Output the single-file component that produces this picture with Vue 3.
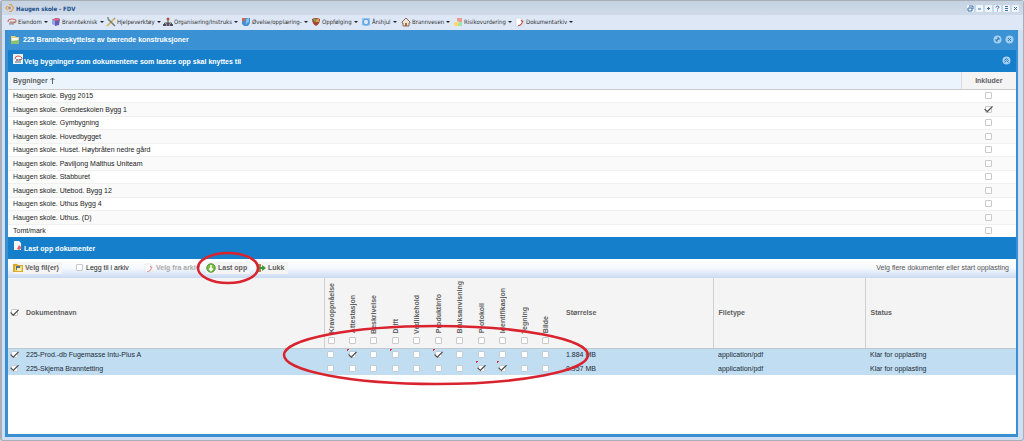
<script setup>
import { ref } from 'vue'

const menus = [
  { label: 'Eiendom', icon: 'estate' },
  { label: 'Brannteknisk', icon: 'fire' },
  { label: 'Hjelpeverktøy', icon: 'tools' },
  { label: 'Organisering/Instruks', icon: 'org' },
  { label: 'Øvelse/opplæring-', icon: 'training' },
  { label: 'Oppfølging', icon: 'shield' },
  { label: 'Årshjul', icon: 'wheel' },
  { label: 'Brannvesen', icon: 'house' },
  { label: 'Risikovurdering', icon: 'risk' },
  { label: 'Dokumentarkiv', icon: 'doc' },
]

const windowTools = [
  { name: 'Gjenopprett', d: 'M1 3h4v3h-4zM2 1h4v3' },
  { name: 'Minimer', d: 'M2 4h3' },
  { name: 'Maksimer', d: 'M2 3.5h3M3.5 2v3' },
  { name: 'Hjelp', d: 'M2 2.500q0-1.500 1.500-1.500t1.500 1.200q0 .8-1.500 1.500v.6M3.500 5.500v.8' },
  { name: 'Fest', d: 'M2 1.500h3M2 3.500h3M2 5.500h3' },
  { name: 'Lukk', d: 'M2 2l3 3M5 2l-3 3' },
]

const buildings = ref([
  { name: 'Haugen skole. Bygg 2015', on: false },
  { name: 'Haugen skole. Grendeskolen Bygg 1', on: true },
  { name: 'Haugen skole. Gymbygning', on: false },
  { name: 'Haugen skole. Hovedbygget', on: false },
  { name: 'Haugen skole. Huset. Høybråten nedre gård', on: false },
  { name: 'Haugen skole. Paviljong Malthus Uniteam', on: false },
  { name: 'Haugen skole. Stabburet', on: false },
  { name: 'Haugen skole. Utebod. Bygg 12', on: false },
  { name: 'Haugen skole. Uthus Bygg 4', on: false },
  { name: 'Haugen skole. Uthus. (D)', on: false },
  { name: 'Tomt/mark', on: false },
])

const tags = ['Kravoppnåelse', 'Attestasjon', 'Beskrivelse', 'Drift', 'Vedlikehold', 'Produktinfo',
  'Bruksanvisning', 'Protokoll', 'Identifikasjon', 'Tegning', 'Bilde']

const documents = ref([
  { name: '225-Prod.-db Fugemasse Intu-Plus A', size: '1.884 MB', tags: [1, 5], changed: [1, 3, 5] },
  { name: '225-Skjema Branntetting', size: '0.957 MB', tags: [7, 8], changed: [7, 8] },
])
</script>

<template>
  <div class="window">
    <header class="titlebar">
      <svg class="icon" viewBox="0 0 10 10"><g fill="none" stroke="#e79a45" stroke-width="1.200"><path d="M4 1.500h2.500M6.500 8.500H4M2.500 3L1 5l1.500 2" /><path d="M6 1.500L8.500 5 6 8.500" /></g><circle cx="4.500" cy="5" r="1.400" fill="#b98a62" /></svg>
      <h1>Haugen skole - FDV</h1>
      <div class="window-tools">
        <button v-for="t in windowTools" :key="t.name" type="button" :aria-label="t.name">
          <svg viewBox="0 0 7 7"><path :d="t.d" /></svg>
        </button>
      </div>
    </header>

    <nav class="menubar">
      <button v-for="m in menus" :key="m.label" type="button">
        <svg class="icon" viewBox="0 0 10 10">
          <g v-if="m.icon === 'estate'" fill="none"><path d="M1 5q0-3 4-3t4 2-4 2H2" stroke="#d86552" stroke-width="1.200" /><path d="M2 7h5M3 5h5" stroke="#8c8c96" /></g>
          <g v-else-if="m.icon === 'fire'"><path d="M1 2l4 1v6L1 7z" fill="#8fa6df" /><path d="M4 1l5 1-1 6-4 1z" fill="#6b5bbb" /><path d="M1 2l7-1 1 2-5 1z" fill="#d8667b" /></g>
          <g v-else-if="m.icon === 'tools'" fill="none" stroke-width="1.500"><path d="M1 9l7-7" stroke="#d9ae45" /><path d="M2 2l7 7" stroke="#6d7d72" /><path d="M1 1l2 0M8 1l1 1" stroke="#7b9a74" /></g>
          <g v-else-if="m.icon === 'org'"><path d="M5 3v3M1.500 8V6h7v2" fill="none" stroke="#554" /><circle cx="5" cy="2" r="1.500" fill="#a65745" /><path d="M0 7h3v2H0zM3.500 6h3v3h-3zM7 7h3v2H7z" fill="#504b5e" /></g>
          <g v-else-if="m.icon === 'training'"><path d="M1 1h8v5L7 9H3L1 7z" fill="#478fd2" /><path d="M1 1h3v3H1z" fill="#d7634d" /><path d="M5 2l3-1v4L5 7z" fill="#7ac4ed" /></g>
          <g v-else-if="m.icon === 'shield'"><path d="M1 2q4-2 8 0 0 5-4 7-4-2-4-7z" fill="#a4432f" /><path d="M2 2h4L3 5z" fill="#6aa64e" /><path d="M6 2h2v3H4z" fill="#d8a248" /></g>
          <g v-else-if="m.icon === 'wheel'" fill="none"><circle cx="5" cy="5" r="3" stroke="#58a4ea" stroke-width="1.700" /><path d="M2 1v2M8 1v2M1 7l2 1M7 8l2-1" stroke="#80baf1" stroke-width="1.500" /></g>
          <g v-else-if="m.icon === 'house'"><path d="M1 5l4-4 4 4v1H8v3H2V6H1z" fill="#eee5d4" stroke="#876d5d" /><path d="M4 6h2v3H4z" fill="#a16a4e" /></g>
          <g v-else-if="m.icon === 'risk'"><path d="M1 5h4v4H1z" fill="#ffd86f" /><path d="M4 1h5v4H6L4 4z" fill="#ef9c88" /><path d="M6 5h3v4H5V7z" fill="#a4e3a0" /></g>
          <g v-else><path d="M1 1h5l2 2v6H1z" fill="#fff" stroke="#cbd2de" stroke-width=".7" /><path d="M3 8.500q4 0 4.500-4.500M6 3l2 2" fill="none" stroke="#b94a4a" stroke-width="1.200" /></g>
        </svg>
        <span>{{ m.label }}</span><i class="caret"></i>
      </button>
    </nav>

    <main class="panel">
      <div class="panel-head">
        <svg class="icon" viewBox="0 0 10 10"><path d="M1 1h4l1 1h3v7H1z" fill="#e6d27e" /><path d="M2 3h6v4H2z" fill="#f7f6e8" /><path d="M1 6l8-1v4H1z" fill="#8fc06b" /></svg>
        <h2>225 Brannbeskyttelse av bærende konstruksjoner</h2>
        <button class="round" type="button" aria-label="Utvid"><svg viewBox="0 0 9 9"><circle cx="4.500" cy="4.500" r="4" /><path d="M3 6l3-3M4 3h2v2M3 4v2h2" /></svg></button>
        <button class="round" type="button" aria-label="Lukk panel"><svg viewBox="0 0 9 9"><circle cx="4.500" cy="4.500" r="4" /><path d="M3 3l3 3M6 3l-3 3" /></svg></button>
      </div>

      <section>
        <div class="section-head">
          <svg class="icon" viewBox="0 0 10 10"><path d="M0 0h10v10H0z" fill="#edf3f8" /><path d="M2 5q0-3 3-3t4 2-3 2H3" fill="none" stroke="#d05e50" /><path d="M2 8h6M3 6h2M6 6h2" stroke="#536b84" /></svg>
          <h3>Velg bygninger som dokumentene som lastes opp skal knyttes til</h3>
          <button class="round" type="button" aria-label="Skjul"><svg viewBox="0 0 9 9"><circle cx="4.500" cy="4.500" r="4" /><path d="M2.500 4.500l2-2 2 2M2.500 6.500l2-2 2 2" /></svg></button>
        </div>
        <table class="buildings">
          <thead>
            <tr><th class="sorted" aria-sort="ascending">Bygninger <svg viewBox="0 0 5 7"><path d="M2.500 7V1M.5 3l2-2 2 2" /></svg></th><th class="include">Inkluder</th></tr>
          </thead>
          <tbody>
            <tr v-for="b in buildings" :key="b.name">
              <td>{{ b.name }}</td>
              <td class="include"><input v-model="b.on" type="checkbox" :aria-label="'Inkluder ' + b.name"></td>
            </tr>
          </tbody>
        </table>
      </section>

      <section>
        <div class="section-head">
          <svg class="icon" viewBox="0 0 10 10"><path d="M1 0h5l2 2v7H1z" fill="#f4f6fb" /><path d="M6 4l3 3-3 2-2-1z" fill="#d8616b" /></svg>
          <h3>Last opp dokumenter</h3>
        </div>
        <div class="toolbar">
          <button class="pick" type="button">
            <svg class="icon" viewBox="0 0 10 10"><path d="M0 1h4l1 1h5v7H0z" fill="#d9aa2e" /><path d="M2 3h7v5H2z" fill="#f4dc6b" /><path d="M3 3h4v4H3z" fill="#56728d" /><path d="M4 5h4v3H4z" fill="#f9eeb0" /></svg>
            Velg fil(er)
          </button>
          <label class="archive"><input type="checkbox"> Legg til i arkiv</label>
          <button class="from-archive" type="button" disabled>
            <svg class="icon" viewBox="0 0 10 10"><path d="M1 1h5l2 2v6H1z" fill="#fafafd" stroke="#dfe2e8" stroke-width=".6" /><path d="M3 8.500q4 0 4.500-4.500M6 3l2 2" fill="none" stroke="#dc9c9c" stroke-width="1.200" /></svg>
            Velg fra arkiv
          </button>
          <button class="upload" type="button">
            <svg class="icon" viewBox="0 0 10 10"><circle cx="5" cy="5" r="4.200" fill="#7cc043" stroke="#4d9130" /><path d="M5 2v5M3.300 5.500L5 7.500l1.700-2" fill="none" stroke="#fff" stroke-width="1.500" /></svg>
            Last opp
          </button>
          <button class="close" type="button">
            <svg class="icon" viewBox="0 0 10 10"><path d="M1 1h4v8H1z" fill="#b0834b" /><path d="M3 4h3V2l4 3-4 3V6H3z" fill="#3b9a3c" /></svg>
            Lukk
          </button>
          <span class="hint">Velg flere dokumenter eller start opplasting</span>
        </div>
        <table class="documents">
          <colgroup>
            <col class="w-check"><col class="w-name">
            <col v-for="(t, i) in tags" :key="t" :class="i % 2 ? 'w-tag-even' : 'w-tag-odd'">
            <col class="w-wide"><col class="w-wide"><col>
          </colgroup>
          <thead>
            <tr>
              <th class="pickcol"><input type="checkbox" checked aria-label="Velg alle"></th>
              <th class="name">Dokumentnavn</th>
              <th v-for="(t, i) in tags" :key="t" class="tag" :class="{ first: i === 0 }">
                <label><span>{{ t }}</span><input type="checkbox"></label>
              </th>
              <th>Størrelse</th>
              <th class="ruled">Filetype</th>
              <th class="ruled">Status</th>
            </tr>
          </thead>
          <tbody>
            <tr v-for="d in documents" :key="d.name">
              <td class="pickcol"><input type="checkbox" checked :aria-label="'Velg ' + d.name"></td>
              <td class="name">{{ d.name }}</td>
              <td v-for="(t, i) in tags" :key="t" class="tag" :class="{ changed: d.changed.includes(i) }">
                <input v-model="d.tags" :value="i" type="checkbox" :aria-label="t + ' ' + d.name">
              </td>
              <td>{{ d.size }}</td>
              <td>application/pdf</td>
              <td>Klar for opplasting</td>
            </tr>
          </tbody>
        </table>
      </section>
    </main>

    <svg class="marks" width="1024" height="441" viewBox="0 0 1024 441" aria-hidden="true">
      <ellipse cx="228" cy="268" rx="30" ry="15" />
      <ellipse cx="436" cy="355" rx="152" ry="29" />
    </svg>
  </div>
</template>

<style>
body { margin: 0; background: #d3e0f2; }
</style>

<style scoped>
* { box-sizing: border-box; }
.window {
  position: relative;
  display: flex;
  flex-direction: column;
  min-height: 100vh;
  padding: 0 5px 3px 3px;
  border: solid #a9afb8;
  border-width: 1px 1px 1px 2px;
  border-radius: 3px;
  background: #d0def2;
  font: 7px/9px "Liberation Sans", Arial, sans-serif;
  color: #222;
}
h1, h2, h3 { margin: 0; font-size: 7px; line-height: 9px; font-weight: bold; }
button { font: inherit; color: inherit; border: 0; padding: 0; background: none; }
svg { display: block; flex: none; }
.icon { width: 10px; height: 10px; }

.titlebar {
  display: flex;
  align-items: center;
  gap: 1px;
  height: 14px;
  margin: 0 -5px 0 -3px;
  padding: 0 4px 0 3px;
  background: linear-gradient(#c5d2e1, #cfdbe9);
}
.titlebar h1 { flex: 1; color: #1c4f8c; font-family: "DejaVu Sans Condensed", "Open Sans", sans-serif; font-size: 6px; }
.window-tools { display: flex; gap: 2px; }
.window-tools button { background: #eff5fc; border-radius: 1px; }
.window-tools svg { width: 7px; height: 7px; }
.window-tools path { fill: none; stroke: #3c6ea8; }

.menubar {
  display: grid;
  grid-template-columns: 44px 55px 57px 78px 70px 50px 40px 52px 62px auto;
  align-items: center;
  justify-content: start;
  height: 15px;
  margin: 0 -5px 0 -3px;
  padding: 0 0 2px 5px;
  background: #dde7f6;
  color: #333;
  font-family: "DejaVu Sans Condensed", "Open Sans", sans-serif;
  font-size: 6px;
}
.menubar button { display: flex; align-items: center; gap: 1px; white-space: nowrap; }
.caret { margin-left: 1px; border: 2px solid transparent; border-top-color: #222; border-bottom: 0; }

.panel { flex: 1; border: solid #3a8fd3; border-width: 0 2px 3px 3px; background: #fff; }
.panel-head {
  display: flex;
  align-items: center;
  gap: 3px;
  height: 20px;
  padding: 0 2px 1px 2px;
  background: #3a92d5;
  color: #fff;
}
.panel-head h2, .section-head h3 { flex: 1; }
.round svg { width: 9px; height: 9px; }
.round circle { fill: #a4cdee; }
.round path { fill: none; stroke: #257fc5; }
.section-head {
  display: flex;
  align-items: center;
  gap: 1px;
  height: 22px;
  padding: 0 5px 1px 5px;
  background: #157fcc;
  color: #fff;
}
.section-head .icon { margin-bottom: 3px; }
.section-head h3 { padding-top: 2px; }

table { width: 100%; border-collapse: collapse; table-layout: fixed; }
th, td { padding: 0 5px; text-align: left; white-space: nowrap; }
th { color: #606060; background: #f4f4f4; }
input {
  appearance: none;
  display: block;
  flex: none;
  width: 7px;
  height: 7px;
  margin: 0;
  border: 1px solid #c9c9c9;
  border-radius: 1px;
  background: #fff;
}
input:checked::before {
  content: "";
  display: block;
  width: 9px;
  height: 7px;
  margin: -1px -2px;
  background: #505050;
  clip-path: polygon(0 50%, 12% 42%, 36% 72%, 90% 5%, 100% 15%, 38% 95%);
}

.buildings { height: 165px; }
.buildings thead tr { height: 17px; }
.buildings th { border-bottom: 1px solid #ccc; }
.buildings .sorted { background: #ebf4fc; }
.sorted svg { display: inline-block; width: 5px; height: 7px; vertical-align: -1px; }
.sorted path { fill: none; stroke: #666; }
.buildings th.include { border-left: 1px solid #ddd; text-align: center; }
.include { width: 55px; }
.include input { margin: 0 auto; }
.buildings tbody tr:nth-child(even) { background: #fafafa; }
.buildings td { border-top: 1px solid #f0f0f0; }

.toolbar {
  display: flex;
  align-items: center;
  height: 19px;
  padding: 0 7px 2px 5px;
  background: linear-gradient(#fff, #f5f8fd 50%, #c9daf2);
}
.toolbar button { display: flex; align-items: center; gap: 2px; height: 12px; background: #f4f4f4; color: #606060; font-weight: bold; white-space: nowrap; }
.toolbar .pick { width: 49px; }
.toolbar .archive { display: flex; align-items: center; gap: 3px; width: 69px; padding-left: 14px; white-space: nowrap; }
.toolbar .from-archive { width: 56px; margin-left: 13px; color: #aaa; background: none; }
.toolbar .upload { width: 44px; margin-left: 6px; }
.toolbar .close { width: 32px; margin-left: 6px; }
.hint { margin-left: auto; color: #555; }

.w-check { width: 14px; }
.w-name { width: 302px; }
.w-tag-odd { width: 22px; }
.w-tag-even { width: 21px; }
.w-wide { width: 152px; }
.documents thead tr { height: 70px; }
.documents th { border-bottom: 1px solid #bcc8d2; }
.documents .ruled, .documents .first { border-left: 1px solid #d0d0d0; }
.documents .pickcol { padding: 0 0 0 3px; }
.documents .name { padding-left: 4px; }
.documents .tag { padding: 0 0 0 3px; }
th.tag { vertical-align: bottom; }
.tag label { display: flex; flex-direction: column; gap: 3px; padding-bottom: 4px; }
.tag label span { width: 7px; line-height: 7px; writing-mode: vertical-rl; transform: rotate(180deg); }
.documents tbody tr { height: 13px; background: #c1ddf1; color: #1c2b38; }
.documents tbody tr + tr { height: 14px; }
.documents .changed { background: linear-gradient(135deg, #d33 2px, transparent 2px) no-repeat 1px 0 / 3px 3px; }
tbody .tag input, tbody .pickcol input { border-color: #c4ccd4; }

.marks { position: absolute; top: -1px; left: -2px; pointer-events: none; }
.marks ellipse { fill: none; stroke: #d9232e; stroke-width: 2.5px; }
</style>
